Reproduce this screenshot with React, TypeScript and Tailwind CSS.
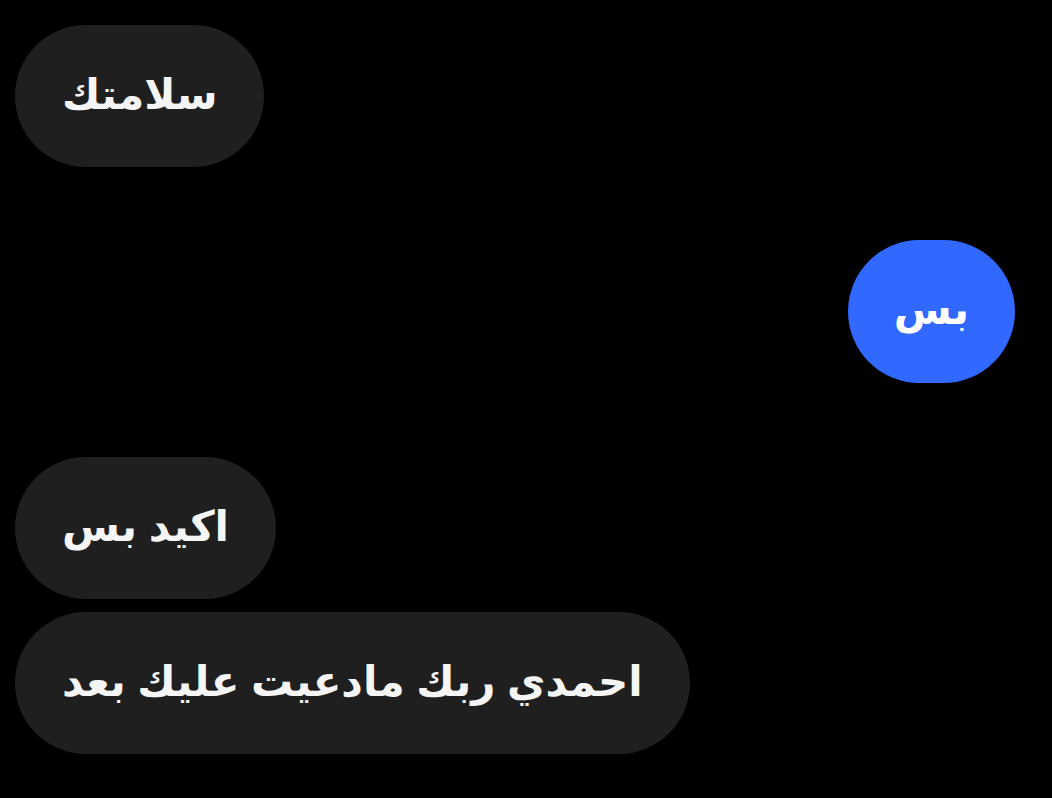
type Msg = { text: string; mine?: boolean; gap: string };

const messages: Msg[] = [
  { text: "سلامتك", gap: "mt-[25px]" },
  { text: "بس", mine: true, gap: "mt-[73px]" },
  { text: "اكيد بس", gap: "mt-[74px]" },
  { text: "احمدي ربك مادعيت عليك بعد", gap: "mt-[13px]" },
];

function Bubble({ text, mine }: { text: string; mine?: boolean }) {
  return (
    <div
      dir="rtl"
      className={
        mine
          ? "flex h-[143px] items-center rounded-full bg-[#3168ff] px-[46px] text-white"
          : "flex h-[142px] items-center rounded-full bg-[#1f1f1f] px-[47px] text-[#f5f5f5]"
      }
    >
      <span className="-mt-[3px] text-[42px] font-bold leading-none [word-spacing:-3px]">
        {text}
      </span>
    </div>
  );
}

export default function App() {
  return (
    <div
      className="flex min-h-[798px] w-full flex-col bg-black pl-[15px] pr-[37px]"
      style={{ fontFamily: '"DejaVu Sans", "Noto Sans", sans-serif' }}
    >
      {messages.map((m, i) => (
        <div
          key={i}
          className={`flex ${m.gap} ${m.mine ? "justify-end" : "justify-start"}`}
        >
          <Bubble text={m.text} mine={m.mine} />
        </div>
      ))}
    </div>
  );
}
